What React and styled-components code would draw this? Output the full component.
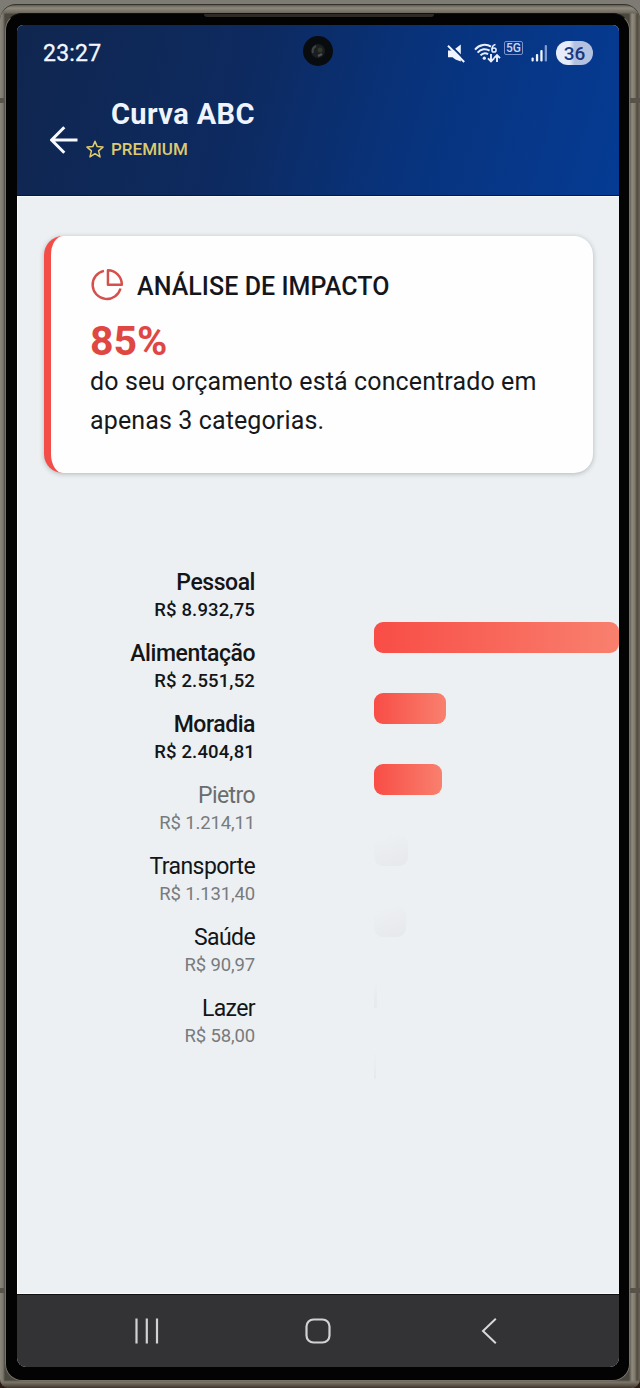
import React from 'react'
import styled, { createGlobalStyle } from 'styled-components'

const categories = [
    { name: 'Pessoal', amount: 'R$ 8.932,75', value: 8932.75, top: true },
    { name: 'Alimentação', amount: 'R$ 2.551,52', value: 2551.52, top: true },
    { name: 'Moradia', amount: 'R$ 2.404,81', value: 2404.81, top: true },
    { name: 'Pietro', amount: 'R$ 1.214,11', value: 1214.11, muted: true },
    { name: 'Transporte', amount: 'R$ 1.131,40', value: 1131.4 },
    { name: 'Saúde', amount: 'R$ 90,97', value: 90.97 },
    { name: 'Lazer', amount: 'R$ 58,00', value: 58 },
]

const PX_PER_REAL = 0.0282

const StatusIcons = () => (
    <Icons>
        <MuteIcon viewBox="0 0 18 19">
            <path d="M1 6.500h5L13.800.5v17L8.500 15.500l-3-2.200H1z" fill="#f1f5ff" />
            <path d="M2.400.2 18.400 16.200" stroke="#0b3078" strokeWidth="2" />
            <path d="M1 1.800 17.200 18" stroke="#f1f5ff" strokeWidth="2" />
        </MuteIcon>
        <svg width="27" height="21" viewBox="0 0 27 21" fill="none" stroke="#e9efff" strokeWidth="2">
            <path d="M1 6.6C5.500 1.200 12.500.7 17 3.700" />
            <path d="M3.600 9.600c3.300-3.800 8.200-4.400 12-2" />
            <path d="M6.500 12.400c2.200-2.400 5-2.800 7.600-1.200" />
            <circle cx="10.300" cy="15.200" r="1.600" fill="#e9efff" stroke="none" />
            <path d="M21.500 1.400c-2.200.5-3.600 2.800-3.600 5.200" strokeWidth="1.500" />
            <circle cx="20" cy="7" r="2.100" strokeWidth="1.500" />
            <path d="M17 11v7m-3-2.600 3 3 3-3M23 19v-6.500m-3 2.600 3-3 3 3" strokeWidth="1.900" />
        </svg>
        <NetworkBadge>5G</NetworkBadge>
        <svg width="17" height="18" viewBox="0 0 17 18" fill="#f1f5ff">
            <rect x="0.500" y="13.500" width="2.200" height="4" rx="1" />
            <rect x="4.900" y="10" width="2.300" height="7.500" rx="1" />
            <rect x="9.300" y="6" width="2.300" height="11.500" rx="1" />
            <rect x="13.700" y="1" width="2.300" height="16.500" rx="1" fill="#7f9ad2" />
        </svg>
        <Battery>36</Battery>
    </Icons>
)

const ImpactCard = () => (
    <Card>
        <CardHeader>
            <svg width="34" height="34" viewBox="-1.500 0 36 36" fill="none" stroke="#d5504c" strokeWidth="2.600">
                <path d="M13.300 2A15 15 0 1 0 30.800 20.600" />
                <path d="M17.500 1.300v15.400h14.700C32.200 8.300 25.800 1.500 17.500 1.300z" strokeLinejoin="round" />
            </svg>
            <CardTitle>ANÁLISE DE IMPACTO</CardTitle>
        </CardHeader>
        <Percent>85%</Percent>
        <Description>
            do seu orçamento está concentrado em<br />
            apenas 3 categorias.
        </Description>
    </Card>
)

const AbcChart = () => (
    <Chart>
        <Labels>
            {categories.map((item) => (
                <Label key={item.name}>
                    <Name $top={item.top} $muted={item.muted}>{item.name}</Name>
                    <Amount $top={item.top}>{item.amount}</Amount>
                </Label>
            ))}
        </Labels>
        <Bars>
            {categories.map((item) => (
                <Bar key={item.name} $top={item.top} style={{ width: item.value * PX_PER_REAL }} />
            ))}
        </Bars>
    </Chart>
)

const App = () => {
    return (
        <>
            <GlobalStyle />
            <Device>
                <Frame>
                    <Bezel>
                        <Earpiece />
                        <Screen>
                            <Header>
                                <StatusBar>
                                    <Clock>23:27</Clock>
                                    <StatusIcons />
                                    <Camera>
                                        <svg width="30" height="30" viewBox="0 0 30 30" fill="none">
                                            <circle cx="15" cy="15" r="7" fill="#1b1e20" />
                                            <path d="M10 17a6 6 0 0 1 3-7" stroke="#3f4345" strokeWidth="2" />
                                            <circle cx="17" cy="14" r="2.500" fill="#303727" />
                                            <path d="m15 20 4-2" stroke="#4d5256" strokeWidth="2" />
                                        </svg>
                                    </Camera>
                                </StatusBar>
                                <AppBar>
                                    <BackIcon viewBox="0 0 28 28">
                                        <path d="M27.500 14H2M14.300 1.200 1.600 14l12.700 12.800" />
                                    </BackIcon>
                                    <Titles>
                                        <Title>Curva ABC</Title>
                                        <Premium>
                                            <svg width="18" height="19" viewBox="0 0 18 19" fill="none" stroke="#e0cb6d" strokeWidth="1.500" strokeLinejoin="round">
                                                <path d="m9 1.200 2.200 5.400 5.800.5-4.400 3.800 1.400 6L9 13.700l-5 3.200 1.400-6L1 7.100l5.800-.5z" />
                                            </svg>
                                            <span>PREMIUM</span>
                                        </Premium>
                                    </Titles>
                                </AppBar>
                            </Header>
                            <Content>
                                <ImpactCard />
                                <AbcChart />
                            </Content>
                            <NavBar>
                                <svg width="26" height="26" viewBox="0 0 26 26" stroke="#d2d2d4" strokeWidth="2.200">
                                    <path d="M2.500.5v25M12.800.5v25M23 .5v25" />
                                </svg>
                                <svg width="26" height="26" viewBox="0 0 26 26" fill="none" stroke="#d2d2d4" strokeWidth="2.200">
                                    <rect x="1.500" y="1.500" width="23" height="23" rx="7" />
                                </svg>
                                <svg width="26" height="26" viewBox="0 0 26 26" fill="none" stroke="#d8d8da" strokeWidth="2">
                                    <path d="M19.800.8 7 13l12.800 12.200" />
                                </svg>
                            </NavBar>
                        </Screen>
                    </Bezel>
                </Frame>
            </Device>
        </>
    )
}

export default App

const GlobalStyle = createGlobalStyle`
    * {
        box-sizing: border-box;
    }

    body {
        margin: 0;
        background: #77756d;
        font-family: Roboto, "Liberation Sans", sans-serif;
    }

    svg {
        display: block;
        flex-shrink: 0;
    }

    h1, h2, p {
        margin: 0;
    }
`

const Device = styled.div`
    width: 640px;
    height: 1388px;
    padding-top: 4px;
    overflow: hidden;
    background: linear-gradient(#7d7b74 0 20px, #2b1c16 1360px);
`

const Frame = styled.div`
    height: 1384px;
    padding: 8px 10px 7px 5px;
    border-top: 1px solid #35322b;
    border-radius: 16px 16px 9px 9px;
    background:
        linear-gradient(#57534a, #57534a) 0 93px / 5px 5px no-repeat,
        linear-gradient(#57534a, #57534a) 0 1283px / 5px 5px no-repeat,
        linear-gradient(#57534a, #57534a) 630px 93px / 10px 5px no-repeat,
        linear-gradient(#57534a, #57534a) 630px 1283px / 10px 5px no-repeat,
        linear-gradient(#5f5b51 0, #8f8a7d 3px, #6c675c 8px, transparent 9px, transparent 1375px, #7d7669 1377px, #544c41 1381px, #33251e 1384px),
        linear-gradient(90deg, #8b877c 0, #7b776c 3px, #4a473f 5px, #4a473f 629px, #928c7e 632px, #7d776a 635px, #4e493d 637px, #6d675a 640px);
`

const Bezel = styled.div`
    position: relative;
    height: 100%;
    padding: 11px 10px 13px 11px;
    border: 1px solid #777267;
    border-top-color: #11100e;
    border-radius: 17px;
    background: #030303;
`

// speaker slit in the top edge of the bezel
const Earpiece = styled.div`
    position: absolute;
    top: 0;
    left: 198px;
    width: 230px;
    height: 3px;
    border-radius: 0 0 3px 3px;
    background: #2d2a25;
`

const Screen = styled.div`
    height: 100%;
    display: flex;
    flex-direction: column;
    overflow: hidden;
    border-radius: 6px 6px 9px 9px;
    background: #ecf0f2;
`

const Header = styled.header`
    height: 171px;
    flex-shrink: 0;
    border-bottom: 1px solid #07183f;
    background: linear-gradient(105deg, #10264f 0%, #0d2a60 38%, #08337c 65%, #053b94 100%);
`

const StatusBar = styled.div`
    position: relative;
    height: 56px;
    padding: 0 26px;
    display: flex;
    justify-content: space-between;
    align-items: center;
`

const Clock = styled.span`
    color: #f4f7ff;
    font-size: 23px;
    letter-spacing: 0.2px;
    -webkit-text-stroke: 0.3px #f4f7ff;
`

// camera cutout sits over the status bar
const Camera = styled.div`
    position: absolute;
    left: 286px;
    top: 11px;
    width: 30px;
    height: 30px;
    border-radius: 50%;
    background: #090c0f;
`

const Icons = styled.div`
    display: flex;
    align-items: center;
`

const MuteIcon = styled.svg`
    width: 18px;
    height: 19px;
    margin-right: 9px;
`

const NetworkBadge = styled.span`
    width: 19px;
    height: 14px;
    margin: -10px 8px 0 3px;
    border: 1px solid #7892ce;
    border-radius: 2px;
    color: #c9d6f5;
    font-size: 12px;
    font-weight: 500;
    line-height: 12.5px;
    text-align: center;
`

const Battery = styled.span`
    width: 37px;
    height: 24px;
    margin-left: 8px;
    border-radius: 12px;
    background: linear-gradient(90deg, #e6ecfa 36%, #b4c2e2 50%);
    color: #17377e;
    font-size: 19px;
    font-weight: 500;
    line-height: 25px;
    text-align: center;
`

const AppBar = styled.div`
    display: flex;
    padding: 16px 0 0 33px;
`

const BackIcon = styled.svg`
    width: 28px;
    height: 28px;
    margin: 29px 8px 0 0;
    fill: none;
    stroke: #f7faff;
    stroke-width: 3;
`

const Titles = styled.div`
    display: flex;
    flex-direction: column;
    gap: 6px;
`

const Title = styled.h1`
    padding-left: 25px;
    color: #eff4ff;
    font-size: 29px;
    font-weight: 700;
    letter-spacing: 0.4px;
    line-height: 34px;
`

const Premium = styled.div`
    display: flex;
    align-items: center;
    gap: 7px;
    color: #dfca6e;
    font-size: 17px;
    font-weight: 500;
    line-height: 24px;
`

const Content = styled.main`
    flex: 1;
    border: 1px solid #f8fafb;
    border-width: 1px 0 1px 1px;
`

const Card = styled.section`
    height: 237px;
    margin: 39px 26px 0;
    padding: 33px 0 0 39px;
    border-left: 7px solid #f44d48;
    border-radius: 19px;
    background: #fefefe;
    box-shadow: 0 1px 5px rgba(40, 50, 60, 0.3);
`

const CardHeader = styled.div`
    display: flex;
    height: 36px;
    gap: 13px;
`

const CardTitle = styled.h2`
    padding-top: 1px;
    color: #15161c;
    font-size: 25px;
    font-weight: 500;
    letter-spacing: 0.06px;
    line-height: 34px;
`

const Percent = styled.p`
    margin-top: 16px;
    color: #df4743;
    font-size: 41px;
    font-weight: 700;
    line-height: 40px;
`

const Description = styled.p`
    margin-top: 2px;
    color: #17181b;
    font-size: 25px;
    letter-spacing: 0.12px;
    line-height: 38.7px;
    white-space: nowrap;
`

const Chart = styled.section`
    display: flex;
    gap: 119px;
    margin-top: 96px;
`

const Labels = styled.div`
    width: 237px;
    flex-shrink: 0;
    text-align: right;
`

const Label = styled.div`
    height: 71px;
`

const Name = styled.div`
    color: ${(props) => (props.$muted ? '#696d70' : '#131518')};
    font-size: 23px;
    font-weight: ${(props) => (props.$top ? 500 : 400)};
    letter-spacing: ${(props) => (props.$top ? '-0.45px' : '-0.6px')};
    line-height: 28px;
`

const Amount = styled.div`
    color: ${(props) => (props.$top ? '#131518' : '#777b7e')};
    font-size: 18.5px;
    font-weight: ${(props) => (props.$top ? 500 : 400)};
    letter-spacing: ${(props) => (props.$top ? '0.15px' : '-0.15px')};
    line-height: 27px;
`

const Bars = styled.div`
    flex: 1;
    min-width: 0;
    display: flex;
    flex-direction: column;
    gap: 40px;
    padding-top: 53px;
`

const Bar = styled.div`
    max-width: 100%;
    height: 31px;
    border-radius: 9px;
    background: ${(props) => (props.$top
        ? 'linear-gradient(90deg, #f84d46, #f9806e)'
        : 'linear-gradient(160deg, #eef1f4, #e6e8ec)')};
`

const NavBar = styled.nav`
    height: 73px;
    flex-shrink: 0;
    display: flex;
    align-items: center;
    justify-content: center;
    gap: 145px;
    border-top: 1px solid #111;
    background: #333335;
`
